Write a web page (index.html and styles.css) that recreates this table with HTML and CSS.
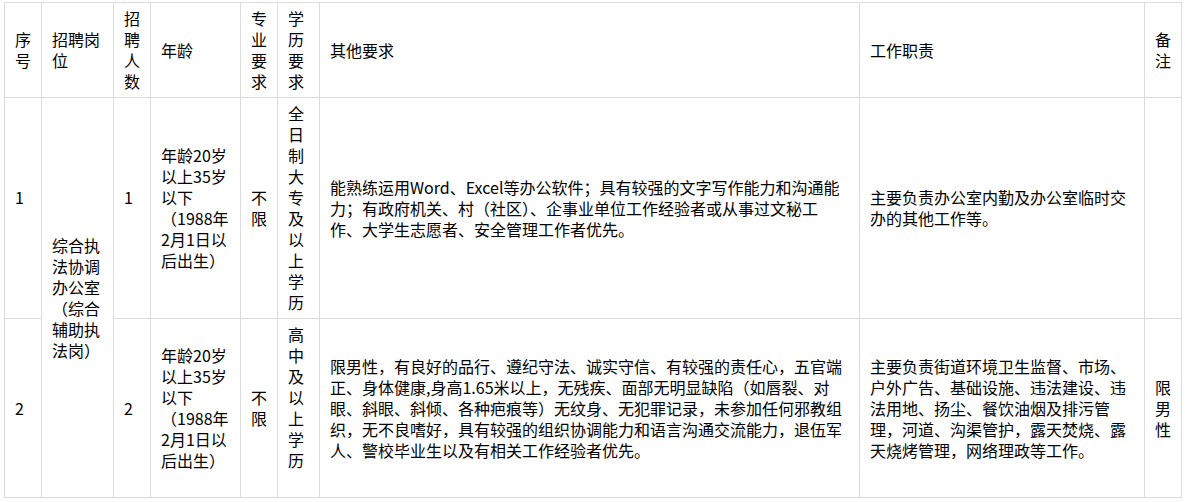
FILE: index.html
```html
<!DOCTYPE html>
<html>
<head>
    <meta charset="UTF-8">
    <title>招聘岗位表</title>
    <link rel="stylesheet" href="styles.css">
</head>
<body>

<table class="job-table">
    <colgroup>
        <col class="c-no">
        <col class="c-post">
        <col class="c-num">
        <col class="c-age">
        <col class="c-major">
        <col class="c-edu">
        <col class="c-other">
        <col class="c-duty">
        <col class="c-note">
    </colgroup>
    <tr class="head">
        <td>序号</td>
        <td>招聘岗位</td>
        <td>招聘人数</td>
        <td>年龄</td>
        <td>专业要求</td>
        <td>学历要求</td>
        <td>其他要求</td>
        <td>工作职责</td>
        <td>备注</td>
    </tr>
    <tr class="row1">
        <td class="lift">1</td>
        <td rowspan="2">综合执法协调办公室（综合辅助执法岗）</td>
        <td class="lift">1</td>
        <td>年龄20岁以上35岁以下（1988年2月1日以后出生）</td>
        <td>不限</td>
        <td>全日制大专及以上学历</td>
        <td>能熟练运用Word、Excel等办公软件；具有较强的文字写作能力和沟通能力；有政府机关、村（社区）、企事业单位工作经验者或从事过文秘工作、大学生志愿者、安全管理工作者优先。</td>
        <td>主要负责办公室内勤及办公室临时交办的其他工作等。</td>
        <td></td>
    </tr>
    <tr class="row2">
        <td>2</td>
        <td>2</td>
        <td>年龄20岁以上35岁以下（1988年2月1日以后出生）</td>
        <td>不限</td>
        <td class="top">高中及以上学历</td>
        <td>限男性，有良好的品行、遵纪守法、诚实守信、有较强的责任心，五官端正、身体健康,身高1.65米以上，无残疾、面部无明显缺陷（如唇裂、对眼、斜眼、斜倾、各种疤痕等）无纹身、无犯罪记录，未参加任何邪教组织，无不良嗜好，具有较强的组织协调能力和语言沟通交流能力，退伍军人、警校毕业生以及有相关工作经验者优先。</td>
        <td>主要负责街道环境卫生监督、市场、户外广告、基础设施、违法建设、违法用地、扬尘、餐饮油烟及排污管理，河道、沟渠管护，露天焚烧、露天烧烤管理，网络理政等工作。</td>
        <td>限男性</td>
    </tr>
</table>

</body>
</html>
```

FILE: styles.css
```css
* {
    margin: 0;
    padding: 0;
}
body {
    margin: 2px 0 0 4px;
    background: #fff;
    color: #000;
    font-family: "Microsoft YaHei", "Noto Sans CJK SC", "Noto Sans", sans-serif;
    font-size: 16px;
    line-height: 21px;
}
.job-table {
    width: 1178px;
    table-layout: fixed;
    border-collapse: collapse;
}
.job-table td {
    border: 1px solid #dcdcdc;
    padding: 5px 10px;
    text-align: left;
    vertical-align: middle;
    line-break: strict;
}
.c-no { width: 37px; }
.c-post { width: 72px; }
.c-num { width: 37px; }
.c-age { width: 90px; }
.c-major { width: 37px; }
.c-edu { width: 42px; }
.c-other { width: 540px; }
.c-duty { width: 285px; }
.c-note { width: 37px; }

.row2 td {
    height: 168px;
}
.job-table td.lift {
    padding-bottom: 26px;
}
.job-table td.top {
    vertical-align: top;
}
```
